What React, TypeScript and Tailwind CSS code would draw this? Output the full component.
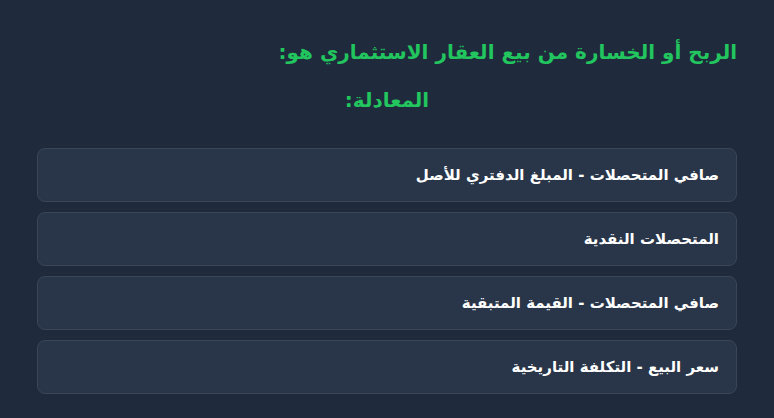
export default function App() {
  const options = [
    "صافي المتحصلات - المبلغ الدفتري للأصل",
    "المتحصلات النقدية",
    "صافي المتحصلات - القيمة المتبقية",
    "سعر البيع - التكلفة التاريخية",
  ];
  return (
    <div
      dir="rtl"
      className="min-h-[418px] w-full bg-[#1f2a3d] px-[37px] pt-[36px] pb-6"
      style={{ fontFamily: '"DejaVu Sans", "Noto Sans", sans-serif' }}
    >
      <h2 className="text-right text-[20px] font-bold leading-[32px] text-[#22c55e]">
        الربح أو الخسارة من بيع العقار الاستثماري هو:
      </h2>
      <p className="mt-[16px] text-center text-[20px] font-bold leading-[32px] text-[#22c55e]">
        المعادلة:
      </p>
      <div className="mt-[32px] flex flex-col gap-[10px]">
        {options.map((o) => (
          <div
            key={o}
            className="flex h-[54px] items-center rounded-lg border border-[#3a4558] bg-[#293548] px-[17px] text-[15px] font-bold text-white"
          >
            {o}
          </div>
        ))}
      </div>
    </div>
  );
}
